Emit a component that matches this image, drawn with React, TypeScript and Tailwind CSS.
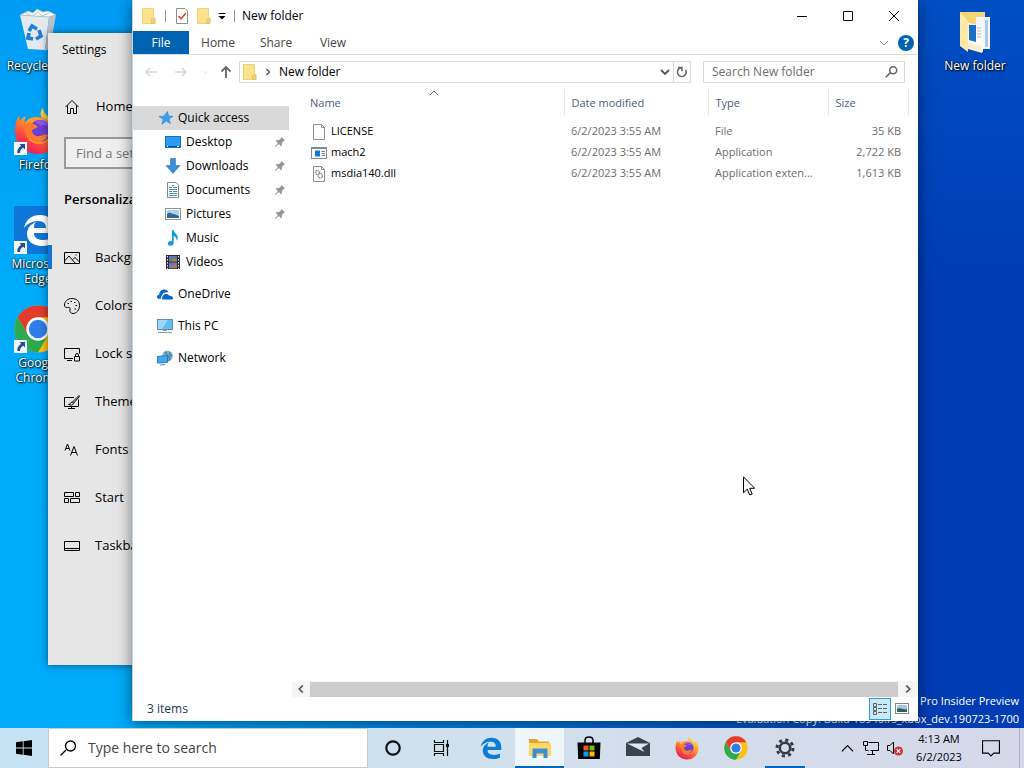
import type { ReactNode } from 'react';

type IconProps = { className?: string };

/* ---------- app logos ---------- */

const FirefoxLogo = ({ className }: IconProps) => (
  <svg viewBox="0 0 48 48" className={className}>
    <defs>
      <linearGradient id="fx-body" x1="0.8" y1="0.05" x2="0.25" y2="1">
        <stop offset="0" stopColor="#ffe14a" />
        <stop offset="0.4" stopColor="#ff9a2a" />
        <stop offset="0.7" stopColor="#ff4a3d" />
        <stop offset="1" stopColor="#e3186a" />
      </linearGradient>
    </defs>
    <path d="M29 1c-3 3-3 7-1 10 5 1 9 5 10 9-8-9-22-9-27-3-1-3 0-6 1-8-3 1-5 3-6 5-1-2-1-4 0-6C2 12 1 18 1 24c0 13 10 23 23 23s23-10 23-22c0-7-3-12-7-15 0 2 1 4 1 5C37 10 29 8 29 1z" fill="url(#fx-body)" />
    <path d="M11 16c3-6 12-8 19-4 5 2 8 6 8 12 0 8-6 13-13 13-9 0-15-8-14-21z" fill="#ff9a2c" />
    <circle cx="26" cy="24" r="11" fill="#6b3fd6" />
    <path d="M11 17c4-2 9-1 13 3l-6 3c0 5 4 7 8 6 3-1 6-2 8-1-2 6-9 9-15 6-6-3-9-9-8-17z" fill="#ff7a2e" />
    <path d="M26 13c5 0 9 3 11 8-3-3-7-4-11-2-1-2-3-3-5-4 1-1 3-2 5-2z" fill="#9352ee" />
  </svg>
);

const ChromeLogo = ({ className }: IconProps) => (
  <svg viewBox="0 0 48 48" className={className}>
    <circle cx="24" cy="24" r="23.5" fill="#fbc116" />
    <path d="M3.6 12.3A23.5 23.5 0 0 1 44.4 12.3H24L13.9 29.8z" fill="#e33b2e" />
    <path d="M3.6 12.3A23.5 23.5 0 0 0 24 47.5L34.2 29.8H13.9z" fill="#2da94f" />
    <circle cx="24" cy="24" r="11.7" fill="#fff" />
    <circle cx="24" cy="24" r="9.2" fill="#2f7de9" />
  </svg>
);

const edgePath =
  'M1 14C3 5 9 1 17 1c9 0 14 6 14 14v4H11c0 5 4 7 9 7 4 0 7-1 9-2v6c-3 1-6 2-10 2C10 32 4 27 4 20c0-6 4-10 9-12-2 2-2 4-2 6h12c0-4-2-7-8-7-6 0-11 3-14 7z';

const EdgeGlyph = ({ className }: IconProps) => (
  <svg viewBox="0 0 32 32" className={className}>
    <path d={edgePath} fill="currentColor" />
  </svg>
);

const EdgeTile = ({ className }: IconProps) => (
  <svg viewBox="0 0 48 48" className={className}>
    <rect width="48" height="48" fill="#0f76d8" />
    <path transform="translate(9 8)" d={edgePath} fill="#fff" />
  </svg>
);

const RecycleBin = ({ className }: IconProps) => (
  <svg viewBox="0 0 48 48" className={className}>
    <path d="M6 7l29 2-4 33-17-1z" fill="#e4e9ee" />
    <path d="M35 9l7-2-6 33-5 3z" fill="#b9c2cb" />
    <path d="M6 7l8-4 5 2 4-4 6 3 5-1 8 4-7 2z" fill="#f6f8fa" stroke="#aab4be" strokeWidth="0.7" />
    <path d="M12 5l6 3 6-4 4 4 7-3" fill="none" stroke="#c0c8d0" />
    <g fill="none" stroke="#1f7fd1" strokeWidth="3.6">
      <path d="M15 23l3-5 5 3" />
      <path d="M25 22l2 6-5 3" />
      <path d="M19 31l-5-1 1-5" />
    </g>
  </svg>
);

const OpenFolder = ({ className }: IconProps) => (
  <svg viewBox="0 0 48 48" className={className}>
    <path d="M9 4h25v36H15z" fill="#f3d675" />
    <path d="M25 9h14v32H25z" fill="#f4f7fa" />
    <path d="M34 12h3v27h-3z" fill="#a9c9e8" />
    <path d="M17 15l15 3v26l-15-4z" fill="#fafafa" />
    <path d="M18 17h7v17l-7-2z" fill="#1c6fc4" />
    <path d="M26 20h4M26 23h4M26 26h4M26 29h4" stroke="#b9bfc6" />
    <path d="M9 4l8 9v31l-8-6z" fill="#ffe9a6" />
    <path d="M17 35l14 3v7l-14-4z" fill="#f9efce" />
  </svg>
);

const ShortcutArrow = () => (
  <svg viewBox="0 0 13 13" className="absolute bottom-0 left-0 h-[13px] w-[13px]">
    <rect width="13" height="13" fill="#f4f6f9" />
    <path d="M5.500 2H11v5.500L9.200 5.800C7 7.300 6 8.500 6 11H3.400C2.800 8 4.500 5.600 7.200 3.800z" fill="#1d4f9c" />
  </svg>
);

/* ---------- explorer icons ---------- */

const FolderIcon = () => (
  <svg viewBox="0 0 16 16" className="h-4 w-4 shrink-0">
    <path d="M1.500.5h11v10h1.500v5H1.500z" fill="#fbe38b" stroke="#e9cb63" strokeWidth="0.8" />
    <path d="M10.500 15.500v-4.300l3.500-.7v5z" fill="#f0d473" stroke="#d9b957" strokeWidth="0.6" />
  </svg>
);

const PropertiesIcon = () => (
  <svg viewBox="0 0 16 16" className="h-4 w-4">
    <path d="M2.500.5h8.500l2.500 2.500v12.500h-11z" fill="#fff" stroke="#8e8e8e" />
    <path d="M4.500 8l2.500 2.700L12 5" fill="none" stroke="#d8472b" strokeWidth="1.6" />
  </svg>
);

const StarIcon = () => (
  <svg viewBox="0 0 16 16" className="h-4 w-4">
    <path d="M9.500 1.500l1 4.500 4.500.3-4 2.700 1.300 4.600-4-2.500-4.500 3.200 1.400-5L1 6.500l4.800-.3z" fill="#3aa0e8" stroke="#2585cf" strokeWidth="0.6" />
  </svg>
);

const DesktopIcon = () => (
  <svg viewBox="0 0 16 16" className="h-4 w-4">
    <rect x="0.500" y="2.500" width="15" height="11" fill="#2a9df0" stroke="#1571bd" />
    <path d="M1 12.500h14" stroke="#0f5590" />
    <path d="M2 12.500h1M12 12.500h2" stroke="#fff" />
  </svg>
);

const DownloadIcon = () => (
  <svg viewBox="0 0 16 16" className="h-4 w-4">
    <path d="M5.500.5h5v7H15L8 15.500 1 7.500h4.500z" fill="#3c8fd4" stroke="#2c7bbd" strokeWidth="0.6" />
  </svg>
);

const DocumentIcon = () => (
  <svg viewBox="0 0 16 16" className="h-4 w-4">
    <path d="M2.500.5h8.500l2.500 2.500v12.500h-11z" fill="#fff" stroke="#7d8c94" />
    <path d="M4 5.500h3M8 5.500h4M4 7.500h8M4 9.500h3M8 9.500h4M4 11.500h8M4 13.500h8M7 3.500h2" stroke="#4797a8" />
  </svg>
);

const PictureIcon = () => (
  <svg viewBox="0 0 16 16" className="h-4 w-4">
    <rect x="0.500" y="2.500" width="15" height="11" fill="#fff" stroke="#8b9299" />
    <rect x="2" y="4" width="12" height="8" fill="#a9d3f5" />
    <path d="M2 8c3-3 5 0 7 0l5 2v2H2z" fill="#39668f" />
  </svg>
);

const MusicIcon = () => (
  <svg viewBox="0 0 16 16" className="h-4 w-4">
    <path d="M7 0h1.600c.3 3 4 4 4.200 7.500 0 1.200-.5 2.400-1.300 3.300C12 7.800 10 6.600 8.700 6v7c0 1.500-1.400 2.700-3.300 2.700-1.600 0-2.700-.8-2.700-2 0-1.700 2-2.900 4.300-2.500z" fill="#159be0" />
  </svg>
);

const VideoIcon = () => (
  <svg viewBox="0 0 16 16" className="h-4 w-4">
    <rect x="1" y="1" width="14" height="14" fill="#2b2b2b" />
    <path d="M2.500 2v13M13.500 2v13" stroke="#eee" strokeDasharray="1.500 1.500" />
    <rect x="4" y="2" width="8" height="5.500" fill="#5a78b8" />
    <rect x="4" y="8.500" width="8" height="6" fill="#6d79c4" />
    <path d="M6 6l3-2 3 2v1.500H6zM7 13l3-3 2 2v2H7z" fill="#b07a3b" />
  </svg>
);

const OneDriveIcon = () => (
  <svg viewBox="0 0 16 16" className="h-4 w-4">
    <path d="M5 12.500C5 9.500 7 8 9 8c1.500 0 2.500.6 3 1.600 2 0 4 .9 4 2.400 0 1-.8 1.500-1.800 1.500H6c-.6 0-1-.4-1-1z" fill="#0b66c9" />
    <path d="M4.200 12.700H2C.7 12.700 0 11.900 0 10.900 0 9.600 1 8.800 2.200 8.800 2.200 5.600 4.600 3.500 7.200 3.500c2 0 3.700 1.100 4.300 2.900-3-.9-6.300.6-7 3.900-.6.700-.6 1.700-.3 2.400z" fill="#0b66c9" />
  </svg>
);

const ThisPcIcon = () => (
  <svg viewBox="0 0 16 16" className="h-4 w-4">
    <rect x="0.500" y="1.500" width="15" height="10" fill="#62bdf5" stroke="#5b90b5" />
    <path d="M1 2h10L5 11H1z" fill="#9ad7fb" />
    <path d="M6 12.500h4M1 14.500h14" stroke="#8ba0b0" />
  </svg>
);

const NetworkIcon = () => (
  <svg viewBox="0 0 16 16" className="h-4 w-4">
    <circle cx="10.500" cy="6" r="5.400" fill="#7ab3d0" />
    <path d="M8 2c2 1 1 3 3 4s2 3 1 5M13 2c-1 2 0 3 2 4" stroke="#4a7d94" strokeWidth="1.400" fill="none" />
    <path d="M.5 6.500l10-1v7l-10 .5z" fill="#3fa9ee" stroke="#2b7db5" />
    <path d="M3 15l5-.5" stroke="#5b90b5" />
  </svg>
);

const PinIcon = () => (
  <svg viewBox="0 0 12 12" className="h-3 w-3">
    <path d="M7.500 1l3.500 3.500-1.200.6-2 2.200.2 2.200-1 .8-2.200-2.200L1.500 11l-.5-.5 2.900-3.300L1.800 5l.8-.9 2.200.1 2.200-2z" fill="#8f979e" />
  </svg>
);

const BlankFileIcon = () => (
  <svg viewBox="0 0 16 16" className="h-4 w-4 shrink-0">
    <path d="M2.500.5h8l3 3v12h-11z" fill="#fff" stroke="#8e8e8e" />
    <path d="M10.500.5v3h3" fill="none" stroke="#8e8e8e" />
  </svg>
);

const ExeIcon = () => (
  <svg viewBox="0 0 16 16" className="h-4 w-4 shrink-0">
    <rect x="0.500" y="2.500" width="15" height="11" fill="#fff" stroke="#7e8c98" />
    <path d="M0 3.500h16" stroke="#7e8c98" />
    <rect x="4" y="5.500" width="5" height="6" fill="#1878c8" />
    <path d="M10.500 6.500H14M10.500 8.500H14M10.500 10.500H14" stroke="#6e7a84" />
  </svg>
);

const DllIcon = () => (
  <svg viewBox="0 0 16 16" className="h-4 w-4 shrink-0">
    <path d="M2.500.5h8l3 3v12h-11z" fill="#fff" stroke="#8e8e8e" />
    <path d="M10.500.5v3h3" fill="none" stroke="#8e8e8e" />
    <circle cx="6.500" cy="6.500" r="2" fill="none" stroke="#8a8f94" strokeWidth="1.500" strokeDasharray="1.200 0.500" />
    <circle cx="9.300" cy="9.800" r="2.200" fill="none" stroke="#8a8f94" strokeWidth="1.500" strokeDasharray="1.200 0.500" />
  </svg>
);

/* Single-stroke glyph on a 16px grid */
function Glyph({ d, className = 'h-4 w-4', width = 1 }: { d: string; className?: string; width?: number }) {
  return (
    <svg viewBox="0 0 16 16" className={className} fill="none" stroke="currentColor" strokeWidth={width}>
      <path d={d} />
    </svg>
  );
}

/* ---------- data ---------- */

const desktopIcons = [
  { label: 'Recycle Bin', icon: <RecycleBin className="h-12 w-12" />, shortcut: false },
  { label: 'Firefox', icon: <FirefoxLogo className="h-12 w-12" />, shortcut: true },
  { label: 'Microsoft Edge', icon: <EdgeTile className="h-12 w-12" />, shortcut: true },
  { label: 'Google Chrome', icon: <ChromeLogo className="h-12 w-12" />, shortcut: true },
];

const settingsItems = [
  { label: 'Background', d: 'M.5 2.500h15v11H.5zM.5 11l4.500-5 6 7M9 9.500l2-2 4.500 4.500M11.500 5h1' },
  { label: 'Colors', d: 'M8 .5C3.500.5.5 3.500.5 7c0 2 1.500 3 3 2.500 2-.6 3 .5 2.500 2.500-.5 2 .8 3.500 3 3.500 3.500 0 6.500-3.500 6.500-8S12.500.5 8 .5zM3.500 5.500H5M6.500 3.500H8M10 4.500h1.500M11.500 7.500H13M10.500 11H12' },
  { label: 'Lock screen', d: 'M9 12.500H.5v-10h15v5M3 14.500h5M10.500 10.500h5v4.500h-5zM11.500 10.500V9a1.500 1.500 0 0 1 3 0v1.500' },
  { label: 'Themes', d: 'M10 3.500H.5v9h14v-7M4 14.500h7M7.500 12.500v2M15 1.500L8.500 8l1 1.200L15.500 2.500zM8.500 8C6 8 6.500 10.500 4.500 10.500c2 1 4.500 1 5-1.300' },
  { label: 'Fonts', d: 'M1 8.500L3.500 2 6 8.500M2 6.500h3M6.500 13.500L10 4.500l3.500 9M7.500 10.500h5' },
  { label: 'Start', d: 'M.5 2.500h9v4h-9zM11.500 2.500h4v4h-4zM.5 8.500h4v4h-4zM6.500 8.500h9v4h-9z' },
  { label: 'Taskbar', d: 'M.5 3.500h15v9H.5zM.5 10.500h15' },
];

const quickAccess = [
  { label: 'Desktop', icon: <DesktopIcon />, pinned: true },
  { label: 'Downloads', icon: <DownloadIcon />, pinned: true },
  { label: 'Documents', icon: <DocumentIcon />, pinned: true },
  { label: 'Pictures', icon: <PictureIcon />, pinned: true },
  { label: 'Music', icon: <MusicIcon />, pinned: false },
  { label: 'Videos', icon: <VideoIcon />, pinned: false },
];

const roots = [
  { label: 'OneDrive', icon: <OneDriveIcon /> },
  { label: 'This PC', icon: <ThisPcIcon /> },
  { label: 'Network', icon: <NetworkIcon /> },
];

const files = [
  { name: 'LICENSE', icon: <BlankFileIcon />, date: '6/2/2023 3:55 AM', type: 'File', size: '35 KB' },
  { name: 'mach2', icon: <ExeIcon />, date: '6/2/2023 3:55 AM', type: 'Application', size: '2,722 KB' },
  { name: 'msdia140.dll', icon: <DllIcon />, date: '6/2/2023 3:55 AM', type: 'Application exten...', size: '1,613 KB' },
];

/* ---------- desktop ---------- */

function DesktopItem({ label, icon, shortcut }: { label: string; icon: ReactNode; shortcut?: boolean }) {
  return (
    <button className="flex h-[99px] w-[76px] flex-col items-center gap-[2px] pt-2 text-xs leading-[15px] text-white [text-shadow:1px_1px_2px_#000,0_0_2px_#000]">
      <span className="relative">
        {icon}
        {shortcut && <ShortcutArrow />}
      </span>
      <span>{label}</span>
    </button>
  );
}

function SettingsWindow() {
  return (
    <section className="absolute top-[33px] bottom-[63px] left-12 w-[480px] bg-[#e6e6e6] text-[13px] text-black shadow-[0_0_8px_rgba(0,0,0,0.5)]">
      <h2 className="flex h-[34px] items-center px-[14px] text-xs">Settings</h2>
      <div className="px-4">
        <button className="mt-4 flex h-12 items-center gap-4">
          <Glyph d="M1.500 8L8 1.500 14.500 8M3.500 6.500v8h3v-5h3v5h3v-8" />
          Home
        </button>
        <input
          type="text"
          aria-label="Find a setting"
          placeholder="Find a setting"
          className="mt-[6px] block h-8 w-60 border-2 border-[#999] bg-[#efefef] px-[10px] placeholder-[#767676]"
        />
        <h3 className="mt-5 leading-5 font-semibold">Personalization</h3>
      </div>
      <nav className="mt-[25px]">
        {settingsItems.map((item) => (
          <button key={item.label} className="flex h-12 w-full items-center gap-[15px] px-4">
            <Glyph d={item.d} />
            {item.label}
          </button>
        ))}
      </nav>
    </section>
  );
}

/* ---------- explorer ---------- */

function TitleBar() {
  return (
    <header className="flex h-[31px] items-center pl-2 text-black">
      <FolderIcon />
      <span className="ml-2 h-3 w-px bg-[#999]" />
      <button aria-label="Properties" className="ml-2">
        <PropertiesIcon />
      </button>
      <button aria-label="New folder" className="ml-[6px]">
        <FolderIcon />
      </button>
      <button aria-label="Customize toolbar" className="ml-1">
        <svg viewBox="0 0 12 12" className="h-3 w-3">
          <path d="M2.500 3.500h7" stroke="#000" />
          <path d="M2.500 6h7L6 9.500z" />
        </svg>
      </button>
      <span className="ml-[6px] h-3 w-px bg-[#999]" />
      <h1 className="ml-[7px] flex-1">New folder</h1>
      <button aria-label="Minimize" className="flex h-full w-[46px] items-center justify-center">
        <Glyph d="M3 8.500h10" />
      </button>
      <button aria-label="Maximize" className="flex h-full w-[46px] items-center justify-center">
        <Glyph d="M3.500 3.500h9v9h-9z" />
      </button>
      <button aria-label="Close" className="flex h-full w-[46px] items-center justify-center">
        <Glyph d="M3 3l10 10M13 3L3 13" />
      </button>
    </header>
  );
}

function Ribbon() {
  return (
    <div className="flex h-6 items-center border-b border-[#dadbdc] text-[#444]">
      <button className="h-full w-14 bg-[#0063b1] text-white">File</button>
      <button className="h-full w-[58px]">Home</button>
      <button className="h-full w-[58px]">Share</button>
      <button className="h-full w-[56px]">View</button>
      <span className="flex-1" />
      <button aria-label="Expand the ribbon" className="text-[#999]">
        <Glyph d="M4 6l4 4 4-4" />
      </button>
      <button aria-label="Help" className="mr-[3px] ml-[6px] flex h-4 w-4 items-center justify-center rounded-full bg-[#0063b1] text-xs font-bold text-white">
        ?
      </button>
    </div>
  );
}

function AddressRow() {
  return (
    <div className="flex h-[34px] items-center pr-3 pl-[10px]">
      <button aria-label="Back" className="text-[#d8d8d8]">
        <Glyph d="M14 8H3M7 4L3 8l4 4" width={1.5} />
      </button>
      <button aria-label="Forward" className="ml-[14px] text-[#d8d8d8]">
        <Glyph d="M2 8h11M9 4l4 4-4 4" width={1.5} />
      </button>
      <button aria-label="Recent locations" className="ml-3 text-[#ddd]">
        <Glyph d="M3 7l3 3 3-3" className="h-3 w-3" />
      </button>
      <button aria-label="Up" className="ml-[5px] text-[#666]">
        <Glyph d="M8 14V3M3.500 7.500L8 3l4.500 4.500" width={1.8} />
      </button>
      <div className="ml-[5px] flex h-[22px] flex-1 items-center border border-[#d9d9d9] pl-[2px] text-black">
        <FolderIcon />
        <Glyph d="M6 4l4 4-4 4" className="ml-1 h-3 w-3 text-[#555]" width={1.8} />
        <span className="ml-[5px] flex-1">New folder</span>
        <button aria-label="Previous locations" className="text-[#555]">
          <Glyph d="M4 6l4 4 4-4" width={1.8} />
        </button>
        <button aria-label="Refresh" className="flex h-full w-[17px] items-center justify-center border-l border-[#d9d9d9] text-[#666]">
          <Glyph d="M12 5.500a5 5 0 1 1-5-2.300M3.500 3H8v4" className="h-[14px] w-[14px]" width={1.8} />
        </button>
      </div>
      <label className="ml-3 flex h-[22px] w-[202px] items-center border border-[#d9d9d9] pr-[6px] pl-2">
        <input type="text" aria-label="Search New folder" placeholder="Search New folder" className="min-w-0 flex-1 placeholder-[#6d6d6d]" />
        <Glyph d="M2 14l5-5M6.500 6a4 4 0 1 1 8 0 4 4 0 1 1-8 0" className="h-[14px] w-[14px] text-[#666]" width={1.8} />
      </label>
    </div>
  );
}

function NavPane() {
  return (
    <nav className="flex w-[156px] shrink-0 flex-col gap-2 pt-[17px] text-black">
      <div>
        <button className="flex h-6 w-full items-center gap-1 bg-[#d9d9d9] pl-[25px]">
          <StarIcon />
          Quick access
        </button>
        {quickAccess.map((item) => (
          <button key={item.label} className="flex h-6 w-full items-center gap-[5px] pr-[3px] pl-8">
            {item.icon}
            <span className="flex-1 text-left">{item.label}</span>
            {item.pinned && <PinIcon />}
          </button>
        ))}
      </div>
      {roots.map((item) => (
        <button key={item.label} className="flex h-6 w-full items-center gap-[5px] pl-6">
          {item.icon}
          {item.label}
        </button>
      ))}
    </nav>
  );
}

function FileList() {
  return (
    <div className="flex min-w-0 flex-1 flex-col pl-[3px]">
      <div className="min-h-0 flex-1 overflow-hidden pt-px pl-[10px]">
        <table className="w-[606px] table-fixed border-collapse text-left text-[11px] text-[#6d6d6d]">
          <thead className="text-[#4c607a]">
            <tr className="h-[26px]">
              <th className="relative w-[262px] border-r border-[#e8e8e8] pl-2 font-normal">
                Name
                <Glyph d="M4 10l4-4 4 4" className="absolute top-[-5px] left-[124px] h-4 w-4 text-[#666]" />
              </th>
              <th className="w-36 border-r border-[#e8e8e8] pl-[7px] font-normal">Date modified</th>
              <th className="w-[120px] border-r border-[#e8e8e8] pl-[7px] font-normal">Type</th>
              <th className="w-20 border-r border-[#e8e8e8] pl-[7px] font-normal">Size</th>
            </tr>
          </thead>
          <tbody>
            <tr className="h-[5px]">
              <td colSpan={4} />
            </tr>
            {files.map((file) => (
              <tr key={file.name} className="h-[21px]">
                <td className="pl-[9px] text-black">
                  <span className="flex items-center gap-1">
                    {file.icon}
                    {file.name}
                  </span>
                </td>
                <td className="pl-[7px]">{file.date}</td>
                <td className="pl-[7px] whitespace-nowrap">{file.type}</td>
                <td className="pr-[7px] text-right">{file.size}</td>
              </tr>
            ))}
          </tbody>
        </table>
      </div>
      {/* Horizontal scrollbar */}
      <div className="flex h-4 items-center bg-[#f5f5f5] text-[#555]">
        <button aria-label="Scroll left" className="flex w-[18px] justify-center">
          <Glyph d="M10 4L6 8l4 4" className="h-[14px] w-[14px]" width={2} />
        </button>
        <span className="h-[15px] flex-1 bg-[#cdcdcd]" />
        <button aria-label="Scroll right" className="flex w-[19px] justify-center">
          <Glyph d="M6 4l4 4-4 4" className="h-[14px] w-[14px]" width={2} />
        </button>
      </div>
    </div>
  );
}

function ExplorerWindow() {
  return (
    <section className="absolute top-0 right-[106px] bottom-[7px] left-[132px] flex flex-col border-r border-l border-r-white border-l-[#bcd8ea] bg-white text-xs shadow-[0_2px_14px_rgba(0,0,0,0.5)]">
      <TitleBar />
      <Ribbon />
      <AddressRow />
      <div className="flex min-h-0 flex-1">
        <NavPane />
        <FileList />
      </div>
      <footer className="flex h-6 items-center pr-1 pl-[14px] text-[#1e395b]">
        <span className="flex-1">3 items</span>
        <button aria-label="Details view" className="flex h-[22px] w-[22px] items-center justify-center border border-[#26a0da] bg-[#cbe8f6] text-[#56626c]">
          <Glyph d="M1.500 2.500h3v3h-3zM1.500 6.500h3v3h-3zM1.500 10.500h3v3h-3zM6 3.500h4M11 3.500h4M6 7.500h4M11 7.500h4M6 11.500h4M11 11.500h4" />
        </button>
        <button aria-label="Large icons view" className="flex h-[22px] w-[22px] items-center justify-center">
          <svg viewBox="0 0 14 14" className="h-[14px] w-[14px]">
            <rect x="0.500" y="1.500" width="13" height="10" fill="#fff" stroke="#7c8791" />
            <path d="M2 3h10v7H2z" fill="#9fc9ee" />
            <path d="M2 7c3-2 5 1 10 0v3H2z" fill="#2f5f52" />
          </svg>
        </button>
      </footer>
    </section>
  );
}

/* ---------- taskbar ---------- */

const StoreIcon = () => (
  <svg viewBox="0 0 24 24" className="h-6 w-6">
    <path d="M8 7V4.500C8 2.500 9.500 1 12 1s4 1.500 4 3.500V7" fill="none" stroke="#000" strokeWidth="1.500" />
    <path d="M.5 6.500h23L22.800 23H1.200z" />
    <path d="M6.500 9.500h5v5h-5z" fill="#f25022" />
    <path d="M12.500 9.500h5v5h-5z" fill="#7fba00" />
    <path d="M6.500 15.500h5v5h-5z" fill="#00a4ef" />
    <path d="M12.500 15.500h5v5h-5z" fill="#ffb900" />
  </svg>
);

const MailIcon = () => (
  <svg viewBox="0 0 24 24" className="h-6 w-6">
    <path d="M0 7l12-6 12 6v13H0z" fill="#37434e" />
    <path d="M1 7.500h22L15.500 12l3 4z" fill="#dfe8f0" />
  </svg>
);

const ExplorerIcon = () => (
  <svg viewBox="0 0 24 24" className="h-6 w-6">
    <path d="M1 3h8l2 2.500h10V9H1z" fill="#e5a52b" />
    <path d="M1 7h22v13H1z" fill="#ffd766" />
    <path d="M4.500 12.500h15V22h-4v-4.500h-7V22h-4z" fill="#3c8fd6" />
  </svg>
);

const TaskViewIcon = () => (
  <svg viewBox="0 0 18 18" className="h-[18px] w-[18px]" fill="none" stroke="#111" strokeWidth="1.200">
    <path d="M1.500 5.500h9v7h-9zM1.500 1v2.500h9V1M1.500 17v-2.500h9V17M14.500 1v16" />
    <path d="M14.500 5v3" strokeWidth="3" />
  </svg>
);

const GearIcon = () => (
  <svg viewBox="0 0 20 20" className="h-5 w-5" fill="none" stroke="#333b44">
    <circle cx="10" cy="10" r="5.200" strokeWidth="2.600" />
    <circle cx="10" cy="10" r="8" strokeWidth="3" strokeDasharray="3.140 3.140" />
  </svg>
);

const taskbarApps = [
  { label: 'Cortana', icon: <svg viewBox="0 0 18 18" className="h-[18px] w-[18px]"><circle cx="9" cy="9" r="6.700" fill="none" stroke="#111" strokeWidth="2.200" /></svg>, state: '' },
  { label: 'Task View', icon: <TaskViewIcon />, state: '' },
  { label: 'Microsoft Edge', icon: <EdgeGlyph className="h-[22px] w-[22px] text-[#0b7bd8]" />, state: '' },
  { label: 'File Explorer', icon: <ExplorerIcon />, state: 'active' },
  { label: 'Microsoft Store', icon: <StoreIcon />, state: '' },
  { label: 'Mail', icon: <MailIcon />, state: '' },
  { label: 'Firefox', icon: <FirefoxLogo className="h-6 w-6" />, state: '' },
  { label: 'Google Chrome', icon: <ChromeLogo className="h-6 w-6" />, state: '' },
  { label: 'Settings', icon: <GearIcon />, state: 'open' },
];

function Taskbar() {
  return (
    <footer className="flex h-10 shrink-0 items-stretch bg-linear-to-r from-[#c5e2f3] via-[#d1e0ed] to-[#d6d8ea] text-black">
      <button aria-label="Start" className="flex w-12 items-center justify-center">
        <svg viewBox="0 0 16 16" className="h-4 w-4">
          <path d="M0 2.200L6.800 1.300v6.300H0zM7.600 1.200L16 0v7.600H7.600zM0 8.400h6.800v6.300L0 13.800zM7.600 8.400H16V16l-8.400-1.200z" />
        </svg>
      </button>
      <label className="flex w-80 items-center gap-3 border border-[#c3cdd6] bg-white pl-[11px] text-sm">
        <Glyph d="M.5 15.500L6 10M5.500 6a5 5 0 1 1 10 0 5 5 0 1 1-10 0" width={1.3} />
        <input type="text" aria-label="Type here to search" placeholder="Type here to search" className="min-w-0 flex-1 placeholder-[#444]" />
      </label>
      {taskbarApps.map((app) => (
        <button
          key={app.label}
          aria-label={app.label}
          className={
            app.state === 'active'
              ? 'flex w-[49px] items-center justify-center border-y-2 border-t-transparent border-b-[#0067c0] bg-[#eef5fb]'
              : 'relative flex w-[49px] items-center justify-center'
          }
        >
          {app.icon}
          {app.state === 'open' && <span className="absolute bottom-0 h-[2px] w-10 bg-[#0067c0]" />}
        </button>
      ))}
      <div className="ml-auto flex items-center">
        <button aria-label="Show hidden icons" className="mr-2">
          <Glyph d="M2 11l6-6 6 6" className="h-[15px] w-[15px]" width={1.3} />
        </button>
        <button aria-label="Network" className="mr-2">
          <Glyph d="M5.500 2.500h10v8h-8M4 14.500h8M9.500 10.500v4M.5 1.500h4v4h-4zM2.500 5.500v5h3" />
        </button>
        <button aria-label="Volume">
          <svg viewBox="0 0 16 16" className="h-4 w-4">
            <path d="M.5 5.500H3L6.500 2v12L3 10.500H.5z" fill="none" stroke="#000" />
            <circle cx="11.500" cy="11" r="4.500" fill="#d13438" />
            <path d="M9.700 9.200l3.600 3.600M13.300 9.200l-3.600 3.600" stroke="#fff" strokeWidth="1.200" />
          </svg>
        </button>
        <div className="w-[72px] text-center text-[11px] leading-[18px]">
          <div>4:13 AM</div>
          <div>6/2/2023</div>
        </div>
        <button aria-label="Notifications" className="mr-[19px] ml-[7px]">
          <Glyph d="M.5 1.500h15v11h-5l-2.500 2.500-2.500-2.500h-5z" className="h-[18px] w-[18px]" />
        </button>
        <span className="h-10 w-[5px] border-l border-[#aab2c4]" />
      </div>
    </footer>
  );
}

export default function App() {
  return (
    <div className="flex h-screen flex-col overflow-hidden font-['Open_Sans','Noto_Sans',sans-serif] select-none">
      <main className="relative flex-1 overflow-hidden bg-linear-to-r from-[#00abfa] from-15% via-[#0070d6] via-55% to-[#003cb4] to-90%">
        <div className="absolute inset-0 bg-linear-to-b from-[#0078e6]/30 to-transparent to-40%" />
        <div className="absolute top-0 left-0 flex flex-col">
          {desktopIcons.map((item) => (
            <DesktopItem key={item.label} {...item} />
          ))}
        </div>
        <div className="absolute top-0 right-[11px]">
          <DesktopItem label="New folder" icon={<OpenFolder className="h-12 w-12" />} />
        </div>
        <div className="absolute right-[5px] bottom-0 text-right text-[11px] leading-[18px] text-white">
          <p>Windows 10 Pro Insider Preview</p>
          <p>Evaluation Copy. Build 18946.rs_xbox_dev.190723-1700</p>
        </div>
        <SettingsWindow />
        {/* Unpainted sliver of the Edge tile over the settings edge */}
        <span className="absolute top-[245px] left-12 h-6 w-1 bg-[#0f76d8]" />
        <ExplorerWindow />
        {/* Mouse pointer */}
        <svg viewBox="0 0 12 20" className="absolute top-[476px] left-[743px] h-5 w-3">
          <path d="M.5.800v16l3.800-3.600 2.500 5.800 2.400-1-2.500-5.700h5z" fill="#fff" stroke="#000" />
        </svg>
      </main>
      <Taskbar />
    </div>
  );
}
